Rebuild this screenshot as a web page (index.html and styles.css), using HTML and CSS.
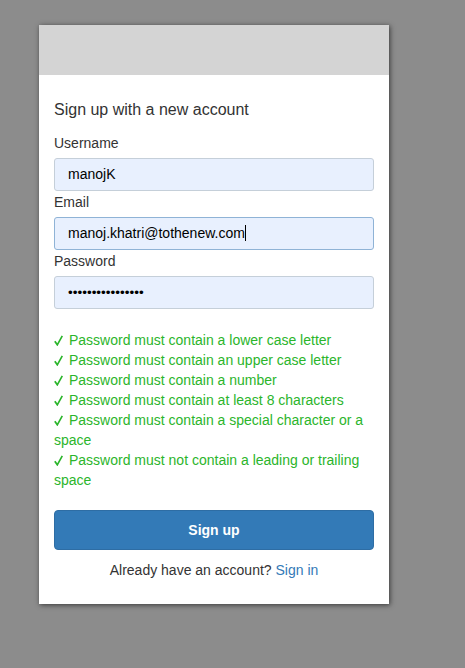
FILE: index.html
```html
<!DOCTYPE html>
<html>
<head>
<meta charset="utf-8">
<link rel="stylesheet" href="styles.css">
</head>
<body>
<div class="card">
  <div class="card-header"></div>
  <div class="card-body">
    <div class="title">Sign up with a new account</div>
    <div class="field">
      <div class="label">Username</div>
      <div class="input">manojK</div>
    </div>
    <div class="field">
      <div class="label">Email</div>
      <div class="input focused">manoj.khatri@tothenew.com<span class="caret"></span></div>
    </div>
    <div class="field">
      <div class="label">Password</div>
      <div class="input pw">••••••••••••••••</div>
    </div>
    <ul class="checks">
      <li><svg class="tick" viewBox="0 0 9 11" width="9" height="11"><path d="M0.8 6.2 L3.3 9.8 L8.3 0.8" fill="none" stroke="currentColor" stroke-width="1.7" stroke-linejoin="miter"/></svg>Password must contain a lower case letter</li>
      <li><svg class="tick" viewBox="0 0 9 11" width="9" height="11"><path d="M0.8 6.2 L3.3 9.8 L8.3 0.8" fill="none" stroke="currentColor" stroke-width="1.7" stroke-linejoin="miter"/></svg>Password must contain an upper case letter</li>
      <li><svg class="tick" viewBox="0 0 9 11" width="9" height="11"><path d="M0.8 6.2 L3.3 9.8 L8.3 0.8" fill="none" stroke="currentColor" stroke-width="1.7" stroke-linejoin="miter"/></svg>Password must contain a number</li>
      <li><svg class="tick" viewBox="0 0 9 11" width="9" height="11"><path d="M0.8 6.2 L3.3 9.8 L8.3 0.8" fill="none" stroke="currentColor" stroke-width="1.7" stroke-linejoin="miter"/></svg>Password must contain at least 8 characters</li>
      <li><svg class="tick" viewBox="0 0 9 11" width="9" height="11"><path d="M0.8 6.2 L3.3 9.8 L8.3 0.8" fill="none" stroke="currentColor" stroke-width="1.7" stroke-linejoin="miter"/></svg>Password must contain a special character or a space</li>
      <li><svg class="tick" viewBox="0 0 9 11" width="9" height="11"><path d="M0.8 6.2 L3.3 9.8 L8.3 0.8" fill="none" stroke="currentColor" stroke-width="1.7" stroke-linejoin="miter"/></svg>Password must not contain a leading or trailing space</li>
    </ul>
    <button class="btn">Sign up</button>
    <div class="footer">Already have an account? <a class="link">Sign in</a></div>
  </div>
</div>
</body>
</html>
```
FILE: styles.css
```css
html, body {
  margin: 0;
  padding: 0;
}
body {
  background: #8c8c8c;
  font-family: "Liberation Sans", Arial, sans-serif;
  color: #333;
  width: 465px;
  height: 668px;
  overflow: hidden;
}
.card {
  margin: 25px 0 0 39px;
  width: 350px;
  background: #fff;
  box-shadow: 1px 1px 5px rgba(0,0,0,0.6);
}
.card-header {
  height: 50px;
  background: #d4d4d4;
}
.card-body {
  padding: 24px 15px 24px 15px;
}
.title {
  font-size: 16px;
  line-height: 22px;
  margin-bottom: 12px;
}
.field .label {
  font-size: 14px;
  line-height: 20px;
  margin-bottom: 5px;
}
.input {
  box-sizing: border-box;
  height: 33px;
  border: 1px solid #c5cfd9;
  border-radius: 3px;
  background: #e8f0fe;
  font-size: 14px;
  line-height: 31px;
  padding-left: 13px;
  color: #000;
}
.input.focused {
  border-color: #8fb3d6;
}
.caret {
  display: inline-block;
  width: 1px;
  height: 16px;
  background: #000;
  vertical-align: -3px;
}
.input.pw {
  font-size: 13.5px;
  letter-spacing: 0;
}
.field + .field {
  margin-top: 1px;
}
.checks {
  list-style: none;
  margin: 21px 0 0 0;
  padding: 0;
  font-size: 14px;
  line-height: 20px;
  color: #2bb52b;
}
.tick {
  vertical-align: -1px;
  margin-right: 6px;
}
.btn {
  display: block;
  width: 320px;
  height: 40px;
  margin-top: 20px;
  border: 1px solid #2e6da4;
  border-radius: 4px;
  background: #337ab7;
  color: #fff;
  font-family: "Liberation Sans", Arial, sans-serif;
  font-weight: bold;
  font-size: 14px;
}
.footer {
  text-align: center;
  font-size: 14px;
  line-height: 20px;
  margin-top: 10px;
}
.link {
  color: #337ab7;
}
```
